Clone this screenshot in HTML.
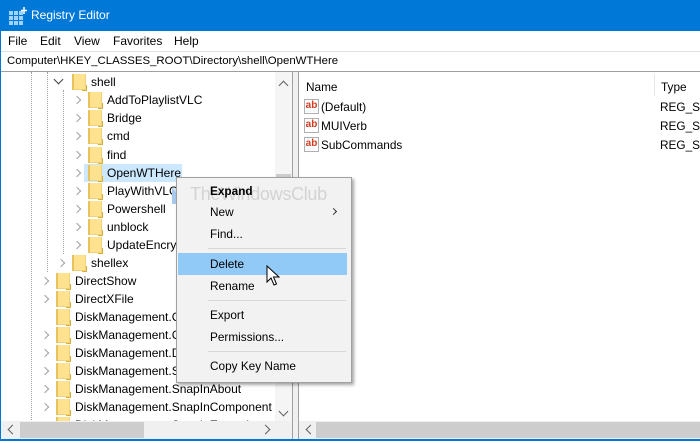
<!DOCTYPE html>
<html><head><meta charset="utf-8"><style>
*{margin:0;padding:0;box-sizing:border-box}
body{width:700px;height:441px;overflow:hidden;background:#fff;font-family:"Liberation Sans",sans-serif;font-size:12px;color:#000;position:relative}
.a{position:absolute;white-space:nowrap}
.fold{position:absolute;width:14px;height:16px;background:#ffe28f;border-left:2px solid #e8c25a;box-shadow:inset -1px -1px 0 #f0d27a}
.fold:after{content:"";position:absolute;right:-1px;bottom:-1px;width:4px;height:5px;border:1px solid #d8ae3e;border-top:none;border-left:none}
.chev{position:absolute;width:6px;height:6px;border-right:1.5px solid #a0a0a0;border-top:1.5px solid #a0a0a0;transform:rotate(45deg)}
.t{position:absolute;line-height:18px;font-size:12px}
.dot{position:absolute;width:0;border-left:1px dotted #a0a0a0}
.mi{position:absolute;left:210px;font-size:11.8px;line-height:16px}
.sep{position:absolute;left:208px;width:138px;height:1px;background:#d7d7d7}
.ab{position:absolute;width:15px;height:15px;border:1px solid #b0b0b0;background:#fff;color:#d43a1e;font-weight:bold;font-size:10px;line-height:12px;text-align:center}
.m{position:absolute;top:34px;font-size:12px}
.r{position:absolute;font-size:11.8px}
</style></head><body>
<div class="a" style="left:0;top:0;width:700px;height:31px;background:#0078d7"></div>
<svg class="a" style="left:9px;top:7px" width="18" height="18"><g fill="#9fd3ff"><rect x="0" y="4" width="4" height="4"/><rect x="5" y="4" width="4" height="4"/><rect x="10" y="4" width="4" height="4"/><rect x="0" y="9" width="4" height="4"/><rect x="5" y="9" width="4" height="4"/><rect x="10" y="9" width="4" height="4"/><rect x="0" y="14" width="4" height="4"/><rect x="5" y="14" width="4" height="4"/><rect x="10" y="14" width="4" height="4"/></g><path d="M15 0v7M12 3.5h6" stroke="#fff" stroke-width="1.5"/></svg>
<div class="a" style="left:31px;top:8px;color:#fff;font-size:12px">Registry Editor</div>
<div class="m" style="left:8px">File</div>
<div class="m" style="left:40px">Edit</div>
<div class="m" style="left:74px">View</div>
<div class="m" style="left:113px">Favorites</div>
<div class="m" style="left:174px">Help</div>
<div class="a" style="left:0;top:51px;width:700px;height:1px;background:#e0e0e0"></div>
<div class="a" style="left:7px;top:55px;font-size:11.4px">Computer\HKEY_CLASSES_ROOT\Directory\shell\OpenWTHere</div>
<div class="a" style="left:0;top:71px;width:700px;height:1px;background:#a0a0a0"></div>
<div class="a" style="left:0;top:31px;width:1px;height:410px;background:#0078d7"></div>
<div class="a" style="left:0;top:439px;width:700px;height:2px;background:#0078d7"></div>
<div class="dot" style="left:31px;top:72px;height:348px"></div>
<div class="dot" style="left:47px;top:72px;height:200px"></div>
<div class="dot" style="left:63px;top:90px;height:164px"></div>
<div class="a" style="left:84px;top:164px;width:98px;height:18px;background:#cce8ff"></div>
<div id="tree"></div>
<div class="a" style="left:275px;top:72px;width:17px;height:349px;background:#f5f5f5"></div>
<div class="a" style="left:276px;top:174px;width:15px;height:24px;background:#cdcdcd"></div>
<div class="a" style="left:280px;top:82px;width:7px;height:7px;border-left:1.5px solid #606060;border-top:1.5px solid #606060;transform:rotate(45deg)"></div>
<div class="a" style="left:280px;top:408px;width:7px;height:7px;border-right:1.5px solid #606060;border-bottom:1.5px solid #606060;transform:rotate(45deg)"></div>
<div class="a" style="left:1px;top:421px;width:291px;height:18px;background:#f0f0f0"></div>
<div class="a" style="left:20px;top:422px;width:124px;height:16px;background:#cdcdcd"></div>
<div class="a" style="left:9px;top:426px;width:7px;height:7px;border-left:1.5px solid #606060;border-bottom:1.5px solid #606060;transform:rotate(45deg)"></div>
<div class="a" style="left:262px;top:426px;width:7px;height:7px;border-right:1.5px solid #606060;border-top:1.5px solid #606060;transform:rotate(45deg)"></div>
<div class="a" style="left:292px;top:72px;width:7px;height:367px;background:#f0f0f0;border-left:1px solid #a0a0a0;border-right:1px solid #a0a0a0"></div>
<div class="r" style="left:306px;top:80px">Name</div>
<div class="a" style="left:654px;top:74px;width:1px;height:22px;background:#e5e5e5"></div>
<div class="r" style="left:661px;top:80px">Type</div>
<div class="ab" style="left:304px;top:99px">ab</div><div class="r" style="left:321px;top:100px">(Default)</div><div class="r" style="left:660px;top:100px">REG_SZ</div>
<div class="ab" style="left:304px;top:118px">ab</div><div class="r" style="left:321px;top:119px">MUIVerb</div><div class="r" style="left:660px;top:119px">REG_SZ</div>
<div class="ab" style="left:304px;top:137px">ab</div><div class="r" style="left:321px;top:138px">SubCommands</div><div class="r" style="left:660px;top:138px">REG_SZ</div>
<div class="a" style="left:299px;top:421px;width:401px;height:18px;background:#f0f0f0"></div>
<div class="a" style="left:316px;top:422px;width:384px;height:16px;background:#cdcdcd"></div>
<div class="a" style="left:307px;top:426px;width:7px;height:7px;border-left:1.5px solid #606060;border-bottom:1.5px solid #606060;transform:rotate(45deg)"></div>
<svg class="a" style="left:172px;top:188px" width="16" height="16"><path d="M0 0L16 16H0z" fill="#a8c8ee"/><path d="M0 0L16 0L16 16z" fill="#d0e2f6"/></svg>
<div class="a" style="left:190px;top:184px;font-size:18px;color:#c4c4c4;letter-spacing:-0.3px">TheWindowsClub</div>
<div class="a" style="left:176px;top:177px;width:176px;height:206px;background:#f2f2f2;border:1px solid #a0a0a0;box-shadow:2px 2px 3px rgba(0,0,0,.35)"></div>
<div class="a" style="left:190px;top:184px;font-size:18px;color:rgba(190,190,190,.6);letter-spacing:-0.3px">TheWindowsClub</div>
<div class="mi" style="top:183px;font-weight:bold">Expand</div>
<div class="mi" style="top:204px">New</div>
<div class="a" style="left:331px;top:209px;width:5px;height:5px;border-right:1px solid #333;border-top:1px solid #333;transform:rotate(45deg)"></div>
<div class="mi" style="top:226px">Find...</div>
<div class="sep" style="top:248px"></div>
<div class="a" style="left:178px;top:253px;width:169px;height:22px;background:#91c9f7"></div>
<div class="mi" style="top:256px">Delete</div>
<div class="mi" style="top:278px">Rename</div>
<div class="sep" style="top:300px"></div>
<div class="mi" style="top:307px">Export</div>
<div class="mi" style="top:329px">Permissions...</div>
<div class="sep" style="top:351px"></div>
<div class="mi" style="top:358px">Copy Key Name</div>
<svg class="a" style="left:266px;top:265px" width="14" height="22"><path d="M1 1V17L5 13L8 20L10.5 19L7.5 12H13Z" fill="#fff" stroke="#000" stroke-width="1"/></svg>
<script>
var rows=[["shell",82,1,72,91,"d"],["AddToPlaylistVLC",100,2,88,107],["Bridge",118,2,88,107],["cmd",136,2,88,107],["find",155,2,88,107],["OpenWTHere",173,2,88,107],["PlayWithVLC",191,2,88,107],["Powershell",209,2,88,107],["unblock",227,2,88,107],["UpdateEncry",245,2,88,107],["shellex",263,1,72,91],["DirectShow",281,0,56,75],["DirectXFile",299,0,56,75],["DiskManagement.Connection",317,0,56,75,"n"],["DiskManagement.Control",335,0,56,75],["DiskManagement.DataObject",353,0,56,75],["DiskManagement.SnapIn",371,0,56,75],["DiskManagement.SnapInAbout",389,0,56,75],["DiskManagement.SnapInComponent",407,0,56,75],["DiskManagement.SnapInExtension",425,0,56,75]];
var h="";rows.forEach(function(r){var c=r[1];
if(r[5]=="d")h+='<div class="a" style="left:'+(r[3]-17)+'px;top:'+(c-6)+'px;width:7px;height:7px;border-right:1.5px solid #404040;border-bottom:1.5px solid #404040;transform:rotate(45deg)"></div>';
else if(r[5]!="n")h+='<div class="chev" style="left:'+(r[3]-14)+'px;top:'+(c-3)+'px"></div>';
h+='<div class="fold" style="left:'+r[3]+'px;top:'+(c-8)+'px"></div><div class="t" style="left:'+r[4]+'px;top:'+(c-9)+'px">'+r[0]+'</div>';});
document.getElementById("tree").innerHTML=h;
</script>
</body></html>
